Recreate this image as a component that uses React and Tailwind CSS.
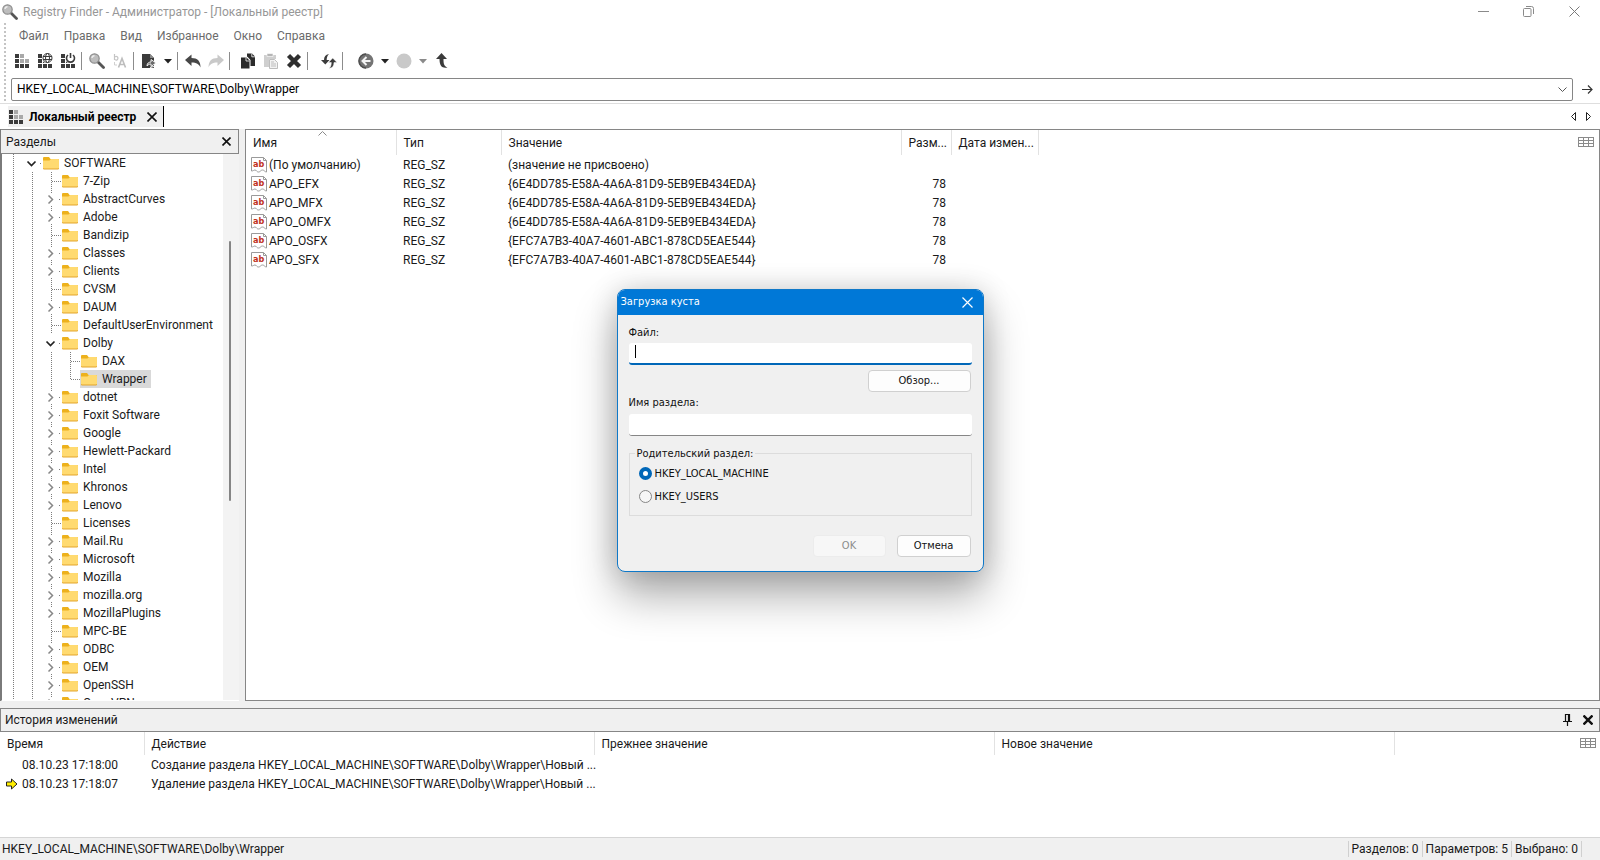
import React from "react";

const TREE = [
  { name: "SOFTWARE", level: 1, state: "open" },
  { name: "7-Zip", level: 2 },
  { name: "AbstractCurves", level: 2, state: "closed" },
  { name: "Adobe", level: 2, state: "closed" },
  { name: "Bandizip", level: 2 },
  { name: "Classes", level: 2, state: "closed" },
  { name: "Clients", level: 2, state: "closed" },
  { name: "CVSM", level: 2 },
  { name: "DAUM", level: 2, state: "closed" },
  { name: "DefaultUserEnvironment", level: 2 },
  { name: "Dolby", level: 2, state: "open" },
  { name: "DAX", level: 3 },
  { name: "Wrapper", level: 3, last: true, selected: true },
  { name: "dotnet", level: 2, state: "closed" },
  { name: "Foxit Software", level: 2, state: "closed" },
  { name: "Google", level: 2, state: "closed" },
  { name: "Hewlett-Packard", level: 2, state: "closed" },
  { name: "Intel", level: 2, state: "closed" },
  { name: "Khronos", level: 2, state: "closed" },
  { name: "Lenovo", level: 2, state: "closed" },
  { name: "Licenses", level: 2 },
  { name: "Mail.Ru", level: 2, state: "closed" },
  { name: "Microsoft", level: 2, state: "closed" },
  { name: "Mozilla", level: 2, state: "closed" },
  { name: "mozilla.org", level: 2, state: "closed" },
  { name: "MozillaPlugins", level: 2, state: "closed" },
  { name: "MPC-BE", level: 2 },
  { name: "ODBC", level: 2, state: "closed" },
  { name: "OEM", level: 2, state: "closed" },
  { name: "OpenSSH", level: 2, state: "closed" },
  { name: "OpenVPN", level: 2, state: "closed" },
];

const VALUES = [
  ["(По умолчанию)", "(значение не присвоено)", ""],
  ["APO_EFX", "{6E4DD785-E58A-4A6A-81D9-5EB9EB434EDA}", "78"],
  ["APO_MFX", "{6E4DD785-E58A-4A6A-81D9-5EB9EB434EDA}", "78"],
  ["APO_OMFX", "{6E4DD785-E58A-4A6A-81D9-5EB9EB434EDA}", "78"],
  ["APO_OSFX", "{EFC7A7B3-40A7-4601-ABC1-878CD5EAE544}", "78"],
  ["APO_SFX", "{EFC7A7B3-40A7-4601-ABC1-878CD5EAE544}", "78"],
];

const HISTORY = [
  { time: "08.10.23 17:18:00", action: "Создание раздела HKEY_LOCAL_MACHINE\\SOFTWARE\\Dolby\\Wrapper\\Новый ..." },
  { time: "08.10.23 17:18:07", action: "Удаление раздела HKEY_LOCAL_MACHINE\\SOFTWARE\\Dolby\\Wrapper\\Новый ...", current: true },
];

/* ---------- icons ---------- */

function Svg({ w = 16, h = 16, children, ...rest }) {
  return (
    <svg width={w} height={h} viewBox={`0 0 ${w} ${h}`} fill="none" aria-hidden="true" className="shrink-0" {...rest}>
      {children}
    </svg>
  );
}

function Blocks({ skip = false }) {
  const dark = "#3b3b3b";
  const light = "#a9a9a9";
  return (
    <g shapeRendering="crispEdges">
      <path fill={dark} d="M1 1h4v4H1zM1 6h4v4H1zM1 11h4v4H1zM6 11h4v4H6zM11 11h4v4h-4z" />
      {skip ? <path fill={dark} d="M6 6h2v4H6z" /> : <path fill={light} d="M6 1h4v4H6zM6 6h4v4H6zM11 6h4v4h-4z" />}
    </g>
  );
}

const BlocksIcon = () => (
  <Svg><Blocks /></Svg>
);

const GlobeBlocksIcon = () => (
  <Svg>
    <Blocks skip />
    <circle cx="10.5" cy="5" r="5.5" fill="#fff" />
    <g stroke="#3b3b3b" strokeWidth="1">
      <circle cx="10.5" cy="5" r="4.5" />
      <ellipse cx="10.5" cy="5" rx="2" ry="4.5" />
      <path d="M6 3.5h9M6 6.5h9" />
    </g>
  </Svg>
);

const PowerBlocksIcon = () => (
  <Svg>
    <Blocks skip />
    <circle cx="10.5" cy="5" r="5.5" fill="#fff" />
    <path d="M8 2a4 4 0 1 0 5 0M10.5 0v5" stroke="#3b3b3b" strokeWidth="1.6" />
  </Svg>
);

const MagnifierIcon = () => (
  <Svg>
    <path d="M9 9l5.500 5.500" stroke="#555" strokeWidth="2.800" strokeLinecap="round" />
    <circle cx="5.500" cy="5.500" r="4.700" fill="#bdbdbd" stroke="#8d8d8d" strokeWidth="1.200" />
    <path d="M3 5a2.500 2.500 0 0 1 2.500-2.300" stroke="#ececec" strokeWidth="1.400" />
  </Svg>
);

const ReplaceIcon = () => (
  <Svg>
    <path d="M2.500 1v6M2.500 4.500a1.800 1.800 0 1 1 0 1.500" stroke="#c4c4c4" strokeWidth="1.200" />
    <path d="M6.500 14.500l3.500-9 3.500 9M8 11.500h4.500" stroke="#bdbdbd" strokeWidth="1.600" />
    <path d="M2.500 9v3h2.500" stroke="#d0d0d0" />
  </Svg>
);

const ExportIcon = () => (
  <Svg>
    <path d="M1 1h8l4 4v10H1z" fill="#3b3b3b" />
    <path d="M9 1v4h4" fill="#8a8a8a" />
    <path d="M6 13c0-3 2-4 4-4V6.500L15 10l-5 3.500V11c-2 0-3 1-4 2z" fill="#6a6a6a" stroke="#fff" strokeWidth=".9" />
    <path d="M9 14.500l4-1" stroke="#fff" />
  </Svg>
);

const UndoIcon = () => (
  <Svg>
    <path d="M0 7l6.500-5.500v3.500c6 0 9 3 9 9.500-1.500-3.500-4-5-9-5v3.500z" fill="#474747" />
  </Svg>
);

const RedoIcon = () => (
  <Svg>
    <path d="M16 7L9.500 1.500v3.500c-6 0-9 3-9 9.500 1.500-3.500 4-5 9-5v3.500z" fill="#c9c9c9" />
  </Svg>
);

const CopyIcon = () => (
  <Svg>
    <path d="M1 4.500h5.500l3 3v8H1z" fill="#2b2b2b" />
    <path d="M7 .5h5l3 3V13h-4.500V7L7.500 3.800H7z" fill="#2b2b2b" />
    <path d="M6 4.500v3.500h3.500M11.800.5v3.300H15" stroke="#e8e8e8" strokeWidth=".9" />
  </Svg>
);

const PasteIcon = () => (
  <Svg>
    <path d="M1 2h12v4H6v8H1z" fill="#cfcfcf" />
    <path d="M4 .5h6v3H4z" fill="#b5b5b5" stroke="#fff" strokeWidth=".6" />
    <path d="M6.500 6.500h5l3 3v6h-8z" fill="#f2f2f2" stroke="#bdbdbd" />
    <path d="M8 9h3M8 11h5M8 13h5" stroke="#bdbdbd" />
  </Svg>
);

const DeleteIcon = () => (
  <Svg>
    <path d="M2.500 2.500l11 11M13.500 2.500l-11 11" stroke="#2f2f2f" strokeWidth="4.400" />
  </Svg>
);

const RefreshIcon = () => (
  <Svg>
    <path d="M8 1C4.500 1.500 3 3.500 3 7H0l4.300 4.500L8.500 7H5.700C5.700 4.500 6.300 2.500 8 1z" fill="#3b3b3b" />
    <path d="M8 15.500c3.500-.5 5-2.500 5-6h3L11.700 5 7.500 9.500h2.800c0 2.500-.6 4.500-2.300 6z" fill="#3b3b3b" stroke="#fff" strokeWidth=".5" />
  </Svg>
);

const BackIcon = () => (
  <Svg>
    <circle cx="8" cy="8" r="7.500" fill="#747474" />
    <path d="M8 1a7 7 0 0 0 0 14" stroke="#4f4f4f" strokeWidth="1.500" />
    <path d="M12.500 8H5M8.500 4L4.500 8l4 4" stroke="#f4f4f4" strokeWidth="2" />
  </Svg>
);

const ForwardIcon = () => (
  <Svg>
    <circle cx="8" cy="8" r="7.500" fill="#c9c9c9" />
  </Svg>
);

const UpIcon = () => (
  <Svg>
    <path d="M7.500 0L13 6H9.500c0 5 .5 7 4 8.500-5 1-8-1-8-8.500H2z" fill="#3b3b3b" />
  </Svg>
);

const CaretDown = ({ color = "#222" }) => (
  <Svg w={8} h={5}>
    <path d="M0 0h8L4 4.500z" fill={color} />
  </Svg>
);

const FolderIcon = () => (
  <Svg w={16} h={14}>
    <path d="M0 2a1 1 0 0 1 1-1h5l1.500 2H15a1 1 0 0 1 1 1v3H0z" fill="#edb11c" />
    <path d="M0 4.500h6.500L8 3h7a1 1 0 0 1 1 1V12a1 1 0 0 1-1 1H1a1 1 0 0 1-1-1z" fill="#ffda70" />
    <path d="M0 12a1 1 0 0 0 1 1h14a1 1 0 0 0 1-1" stroke="#e3a52a" strokeWidth="1" />
  </Svg>
);

const StringValueIcon = () => (
  <svg width="16" height="16" viewBox="0 0 16 16" aria-hidden="true" className="shrink-0">
    <path d="M.5.500h12l3 3v11.500c-2 0-2-2-4-2s-2 2-4 2-2-2-3.500-2-1.500 1-3.500 1z" fill="#fff" stroke="#9a9a9a" />
    <path d="M12.500.500v3h3" fill="none" stroke="#9a9a9a" />
    <text x="2" y="10" fontSize="9" fontWeight="700" fill="#c0301c" fontFamily="DejaVu Sans Condensed, sans-serif">ab</text>
  </svg>
);

const GridIcon = () => (
  <Svg w={16} h={10}>
    <path d="M.5.500h15v9H.500zM.500 3.500h15M.500 6.500h15M5.500 0v10M10.500 0v10" stroke="#8a8a8a" shapeRendering="crispEdges" />
  </Svg>
);

const Cross = ({ size = 9, color = "#111", stroke = 1.5 }) => (
  <Svg w={size} h={size}>
    <path d={`M.5.5L${size - 0.5} ${size - 0.5}M${size - 0.5}.5L.5 ${size - 0.5}`} stroke={color} strokeWidth={stroke} />
  </Svg>
);

/* ---------- tree ---------- */

function Guide({ kind }) {
  // kind: line | branch | corner | open | closed
  return (
    <Svg w={19} h={18}>
      <g stroke="#7d7d7d" strokeDasharray="1 1" shapeRendering="crispEdges">
        {(kind === "line" || kind === "branch") && <path d="M9.500 0v18" />}
        {kind === "corner" && <path d="M9.500 0v10" />}
        {kind === "closed" && <path d="M9.500 0v3M9.500 16v2" />}
        {(kind === "branch" || kind === "corner") && <path d="M10 9.500h9" />}
        {(kind === "open" || kind === "closed") && <path d="M17 9.500h2" />}
      </g>
      {kind === "closed" && <path d="M6.500 5.500l4 4-4 4" stroke="#868686" strokeWidth="1.500" />}
      {kind === "open" && <path d="M4.500 7.500l4 4 4-4" stroke="#222" strokeWidth="1.700" />}
    </Svg>
  );
}

function TreeRow({ item }) {
  const kind = item.state || (item.last ? "corner" : "branch");
  return (
    <li role="treeitem" aria-selected={!!item.selected} className="flex h-[18px] items-center pl-[2px]">
      {Array.from({ length: item.level }, (_, i) => <Guide key={i} kind="line" />)}
      <Guide kind={kind} />
      <span className={item.selected ? "flex h-[18px] items-center gap-[5px] bg-[#d9d9d9] pl-px pr-1" : "flex h-[18px] items-center gap-[5px] pl-px pr-1"}>
        <FolderIcon />
        <span className="whitespace-nowrap">{item.name}</span>
      </span>
    </li>
  );
}

/* ---------- pieces ---------- */

function ToolButton({ label, disabled, narrow, children }) {
  return (
    <button
      type="button"
      aria-label={label}
      disabled={disabled}
      className={narrow ? "flex h-6 w-[15px] items-center justify-center" : "flex h-6 w-[23px] items-center justify-center"}
    >
      {children}
    </button>
  );
}

const Divider = () => <span className="mr-[3px] ml-[2px] h-[18px] w-px bg-[#8c8c8c]" />;

function HeadCell({ children, className = "" }) {
  return (
    <th scope="col" className={`border-r border-[#e2e2e2] px-[7px] text-left font-normal whitespace-nowrap ${className}`}>
      {children}
    </th>
  );
}

function LoadHiveDialog() {
  const field = "h-[22px] w-full rounded-[3px] bg-white px-[6px] caret-transparent outline-none";
  const radio = "h-[13px] w-[13px] appearance-none rounded-full border border-[#868686] bg-[#f6f6f6] checked:border-4 checked:border-[#0067b8] checked:bg-white";
  return (
    <section
      role="dialog"
      aria-labelledby="dlg-title"
      className="w-[367px] overflow-hidden rounded-lg border border-[#0f78c8] bg-[#f0f0f0] pb-[14px] text-[11px] leading-4 text-[#111] shadow-[0_24px_44px_rgba(0,0,0,0.32),0_0_28px_rgba(0,0,0,0.16)] [font-family:'DejaVu_Sans_Condensed','DejaVu_Sans',sans-serif]"
    >
      <header className="flex h-[25px] items-center justify-between bg-[#0078d7] pr-[10px] pl-[3px] text-white">
        <h2 id="dlg-title">Загрузка куста</h2>
        <button type="button" aria-label="Закрыть"><Cross size={11} color="#fff" stroke={1.2} /></button>
      </header>
      <form className="flex flex-col px-[11px] pt-[10px]" onSubmit={(e) => e.preventDefault()}>
        <label htmlFor="hive-file">Файл:</label>
        <div className="relative mt-[2px] flex">
          <input id="hive-file" type="text" className={`${field} border-b-2 border-[#0067b8]`} />
          <span className="absolute top-[2px] left-[6px] h-[13px] w-px bg-black" />
        </div>
        <button type="button" className="mt-[5px] mr-[1px] h-[22px] w-[103px] self-end rounded-[4px] border border-[#d0d0d0] bg-[#fdfdfd]">
          Обзор...
        </button>
        <label htmlFor="hive-key" className="mt-[3px]">Имя раздела:</label>
        <input id="hive-key" type="text" className={`${field} mt-[3px] border-b border-[#868686]`} />
        <fieldset className="mt-[10px] flex h-[70px] flex-col border border-[#dcdcdc] px-[9px]">
          <legend className="-ml-[4px] px-[2px]">Родительский раздел:</legend>
          <label className="mt-[4px] flex items-center gap-[3px]">
            <input type="radio" name="parent" defaultChecked className={radio} />
            HKEY_LOCAL_MACHINE
          </label>
          <label className="mt-[7px] flex items-center gap-[3px]">
            <input type="radio" name="parent" className={radio} />
            HKEY_USERS
          </label>
        </fieldset>
        <div className="mt-[19px] mr-[1px] flex justify-end gap-[11px]">
          <button type="submit" disabled className="h-[22px] w-[73px] rounded-[4px] border border-[#ececec] bg-[#f7f7f7] text-[#8c8c8c]">OK</button>
          <button type="button" className="h-[22px] w-[74px] rounded-[4px] border border-[#d0d0d0] bg-[#fdfdfd]">Отмена</button>
        </div>
      </form>
    </section>
  );
}

/* ---------- window ---------- */

export default function App() {
  return (
    <div className="relative flex h-screen flex-col overflow-hidden bg-white text-[12px] leading-4 text-[#1a1a1a] [font-family:Roboto,'Noto_Sans',sans-serif]">
      <header className="flex h-[23px] items-center pl-[2px]">
        <MagnifierIcon />
        <h1 className="ml-[5px] flex-1 text-[#979797]">Registry Finder - Администратор - [Локальный реестр]</h1>
        <div className="flex items-center pr-[20px]">
          <button type="button" aria-label="Свернуть" className="flex w-[45px] justify-center">
            <Svg w={11} h={11}><path d="M0 5.500h11" stroke="#8a8a8a" /></Svg>
          </button>
          <button type="button" aria-label="Восстановить" className="flex w-[45px] justify-center">
            <Svg w={11} h={11}>
              <rect x=".5" y="2.500" width="7.500" height="8" rx="1" stroke="#8a8a8a" />
              <path d="M3 .5h5.500a2 2 0 0 1 2 2V8" stroke="#8a8a8a" />
            </Svg>
          </button>
          <button type="button" aria-label="Закрыть" className="ml-[18px] flex justify-center">
            <Cross size={11} color="#7a7a7a" stroke={1} />
          </button>
        </div>
      </header>

      <div className="flex border-b border-[#dedede]">
        <div className="ml-1 w-[2px] bg-[repeating-linear-gradient(#c4c4c4_0_2px,#fff_2px_4px)]" />
        <div className="min-w-0 flex-1 pl-[5px]">
          <nav className="flex h-[25px] items-center pl-px text-[#6b6b6b]">
            {["Файл", "Правка", "Вид", "Избранное", "Окно", "Справка"].map((m) => (
              <button key={m} type="button" className="pr-[8px] pl-[7px]">{m}</button>
            ))}
          </nav>
          <div className="-ml-px flex h-[26px] items-center" role="toolbar">
            <ToolButton label="Локальный реестр"><BlocksIcon /></ToolButton>
            <ToolButton label="Удалённый реестр"><GlobeBlocksIcon /></ToolButton>
            <ToolButton label="Автономный реестр"><PowerBlocksIcon /></ToolButton>
            <Divider />
            <ToolButton label="Найти"><MagnifierIcon /></ToolButton>
            <ToolButton label="Заменить" disabled><ReplaceIcon /></ToolButton>
            <Divider />
            <ToolButton label="Экспорт"><ExportIcon /></ToolButton>
            <ToolButton label="Параметры экспорта" narrow><CaretDown /></ToolButton>
            <Divider />
            <ToolButton label="Отменить"><UndoIcon /></ToolButton>
            <ToolButton label="Вернуть" disabled><RedoIcon /></ToolButton>
            <Divider />
            <span className="w-[3px]" />
            <ToolButton label="Копировать"><CopyIcon /></ToolButton>
            <ToolButton label="Вставить" disabled><PasteIcon /></ToolButton>
            <ToolButton label="Удалить"><DeleteIcon /></ToolButton>
            <Divider />
            <span className="w-[6px]" />
            <ToolButton label="Обновить"><RefreshIcon /></ToolButton>
            <Divider />
            <span className="w-[8px]" />
            <ToolButton label="Назад"><BackIcon /></ToolButton>
            <ToolButton label="История назад" narrow><CaretDown /></ToolButton>
            <ToolButton label="Вперёд" disabled><ForwardIcon /></ToolButton>
            <ToolButton label="История вперёд" narrow disabled><CaretDown color="#8a8a8a" /></ToolButton>
            <ToolButton label="Вверх"><UpIcon /></ToolButton>
          </div>
          <div className="flex items-center pt-1 pb-[2px]">
            <div className="flex h-[23px] flex-1 items-center rounded-[2px] border border-[#868686] pr-[5px]">
              <input
                type="text"
                aria-label="Адрес"
                defaultValue={"HKEY_LOCAL_MACHINE\\SOFTWARE\\Dolby\\Wrapper"}
                className="h-full flex-1 bg-transparent pb-px pl-[5px] text-black outline-none"
              />
              <button type="button" aria-label="Показать список">
                <Svg w={9} h={6}><path d="M.5.500l4 4 4-4" stroke="#555" /></Svg>
              </button>
            </div>
            <button type="button" aria-label="Перейти" className="mr-[7px] ml-[9px]">
              <Svg w={11} h={9}><path d="M0 4.500h10M6 .5l4 4-4 4" stroke="#333" strokeWidth="1.200" /></Svg>
            </button>
          </div>
        </div>
      </div>

      <div className="flex h-[25px] items-center justify-between pr-[9px] pl-2">
        <div className="flex h-[21px] items-center border-r border-black bg-[#f0f0f0] pr-[6px] font-bold text-black">
          <BlocksIcon />
          <span className="ml-[5px]">Локальный реестр</span>
          <button type="button" aria-label="Закрыть вкладку" className="ml-[11px]"><Cross size={10} stroke={1.6} /></button>
        </div>
        <div className="flex items-center gap-[10px]">
          <button type="button" aria-label="Предыдущая вкладка">
            <Svg w={5} h={9}><path d="M4.500.5v8l-4-4z" stroke="#222" /></Svg>
          </button>
          <button type="button" aria-label="Следующая вкладка">
            <Svg w={5} h={9}><path d="M.5.500v8l4-4z" stroke="#222" /></Svg>
          </button>
        </div>
      </div>

      <main className="flex min-h-0 flex-1 bg-[#f0f0f0]">
        <aside className="flex w-[239px] flex-col border-l border-[#7a7a7a]">
          <header className="flex h-[25px] shrink-0 items-center justify-between border border-l-0 border-[#868686] pr-[7px] pl-[5px]">
            <h2>Разделы</h2>
            <button type="button" aria-label="Закрыть панель"><Cross size={9} stroke={1.6} /></button>
          </header>
          <div className="flex min-h-0 flex-1 border-b border-l border-b-white border-l-[#7a7a7a]">
            <ul role="tree" className="min-w-0 flex-1 overflow-hidden bg-white">
              {TREE.map((item) => <TreeRow key={item.name} item={item} />)}
            </ul>
            <div className="w-[16px] bg-[#f3f3f3] pt-[87px]">
              <div className="ml-[6px] h-[260px] w-[2px] rounded-full bg-[#858585]" />
            </div>
          </div>
        </aside>

        <section className="ml-[6px] flex min-w-0 flex-1 items-start border border-[#868686] bg-white pr-[5px]">
          <table className="w-[792px] table-fixed border-collapse">
            <colgroup>
              <col className="w-[150px]" />
              <col className="w-[105px]" />
              <col className="w-[400px]" />
              <col className="w-[50px]" />
              <col className="w-[87px]" />
            </colgroup>
            <thead>
              <tr className="h-[25px]">
                <HeadCell className="relative">
                  Имя
                  <span className="absolute top-[1px] left-[72px]">
                    <Svg w={9} h={5}><path d="M.5 4.500l4-4 4 4" stroke="#8a8a8a" /></Svg>
                  </span>
                </HeadCell>
                <HeadCell>Тип</HeadCell>
                <HeadCell>Значение</HeadCell>
                <HeadCell>Разм...</HeadCell>
                <HeadCell>Дата измен...</HeadCell>
              </tr>
            </thead>
            <tbody>
              {VALUES.map(([name, value, size]) => (
                <tr key={name} className="h-[19px]">
                  <td className="py-0 pl-[5px]">
                    <span className="flex h-[19px] items-center gap-[2px] whitespace-nowrap"><StringValueIcon />{name}</span>
                  </td>
                  <td className="px-[7px] py-0">REG_SZ</td>
                  <td className="px-[7px] py-0 whitespace-nowrap">{value}</td>
                  <td className="px-[5px] py-0 text-right">{size}</td>
                  <td />
                </tr>
              ))}
            </tbody>
          </table>
          <button type="button" aria-label="Столбцы" className="mt-[7px] ml-auto"><GridIcon /></button>
        </section>
      </main>

      <section className="border-t-[7px] border-[#f0f0f0]">
        <header className="flex h-[24px] items-center border border-[#868686] bg-[#f0f0f0] pr-[6px] pl-[4px]">
          <h2 className="flex-1">История изменений</h2>
          <button type="button" aria-label="Закрепить" className="mr-[11px]">
            <Svg w={9} h={12}><path d="M2.500 7V.5h4V7M0 7.500h9M4.500 8v4M5.500 1v6" stroke="#111" strokeWidth="1.200" /></Svg>
          </button>
          <button type="button" aria-label="Закрыть историю"><Cross size={10} stroke={2.4} /></button>
        </header>
        <div className="flex h-[105px] items-start pr-1">
          <table className="w-[1394px] table-fixed border-collapse">
            <colgroup>
              <col className="w-[144px]" />
              <col className="w-[450px]" />
              <col className="w-[400px]" />
              <col className="w-[400px]" />
            </colgroup>
            <thead>
              <tr className="h-[23px]">
                <HeadCell>Время</HeadCell>
                <HeadCell>Действие</HeadCell>
                <HeadCell>Прежнее значение</HeadCell>
                <HeadCell>Новое значение</HeadCell>
              </tr>
            </thead>
            <tbody>
              {HISTORY.map((row) => (
                <tr key={row.time} className="h-[19px]">
                  <td className="py-0 pl-[6px]">
                    <span className="flex h-[19px] items-center gap-1 whitespace-nowrap">
                      <Svg w={12} h={12}>
                        {row.current && <path d="M.5 4h5V1l5.500 5-5.500 5V8h-5z" fill="#ffee00" stroke="#222" />}
                      </Svg>
                      {row.time}
                    </span>
                  </td>
                  <td className="px-[7px] py-0 whitespace-nowrap">{row.action}</td>
                  <td />
                  <td />
                </tr>
              ))}
            </tbody>
          </table>
          <button type="button" aria-label="Столбцы истории" className="mt-[6px] ml-auto"><GridIcon /></button>
        </div>
      </section>

      <footer className="flex h-[23px] items-center border-t border-[#d5d5d5] bg-[#f0f0f0] pr-[18px] pl-[2px]">
        <span className="flex-1">{"HKEY_LOCAL_MACHINE\\SOFTWARE\\Dolby\\Wrapper"}</span>
        <span className="border-l border-[#d0d0d0] px-[3px]">Разделов: 0</span>
        <span className="border-l border-[#d0d0d0] px-[3px]">Параметров: 5</span>
        <span className="border-x border-[#d0d0d0] px-[3px]">Выбрано: 0</span>
      </footer>

      <div className="absolute inset-0 flex items-center justify-center">
        <LoadHiveDialog />
      </div>
    </div>
  );
}
